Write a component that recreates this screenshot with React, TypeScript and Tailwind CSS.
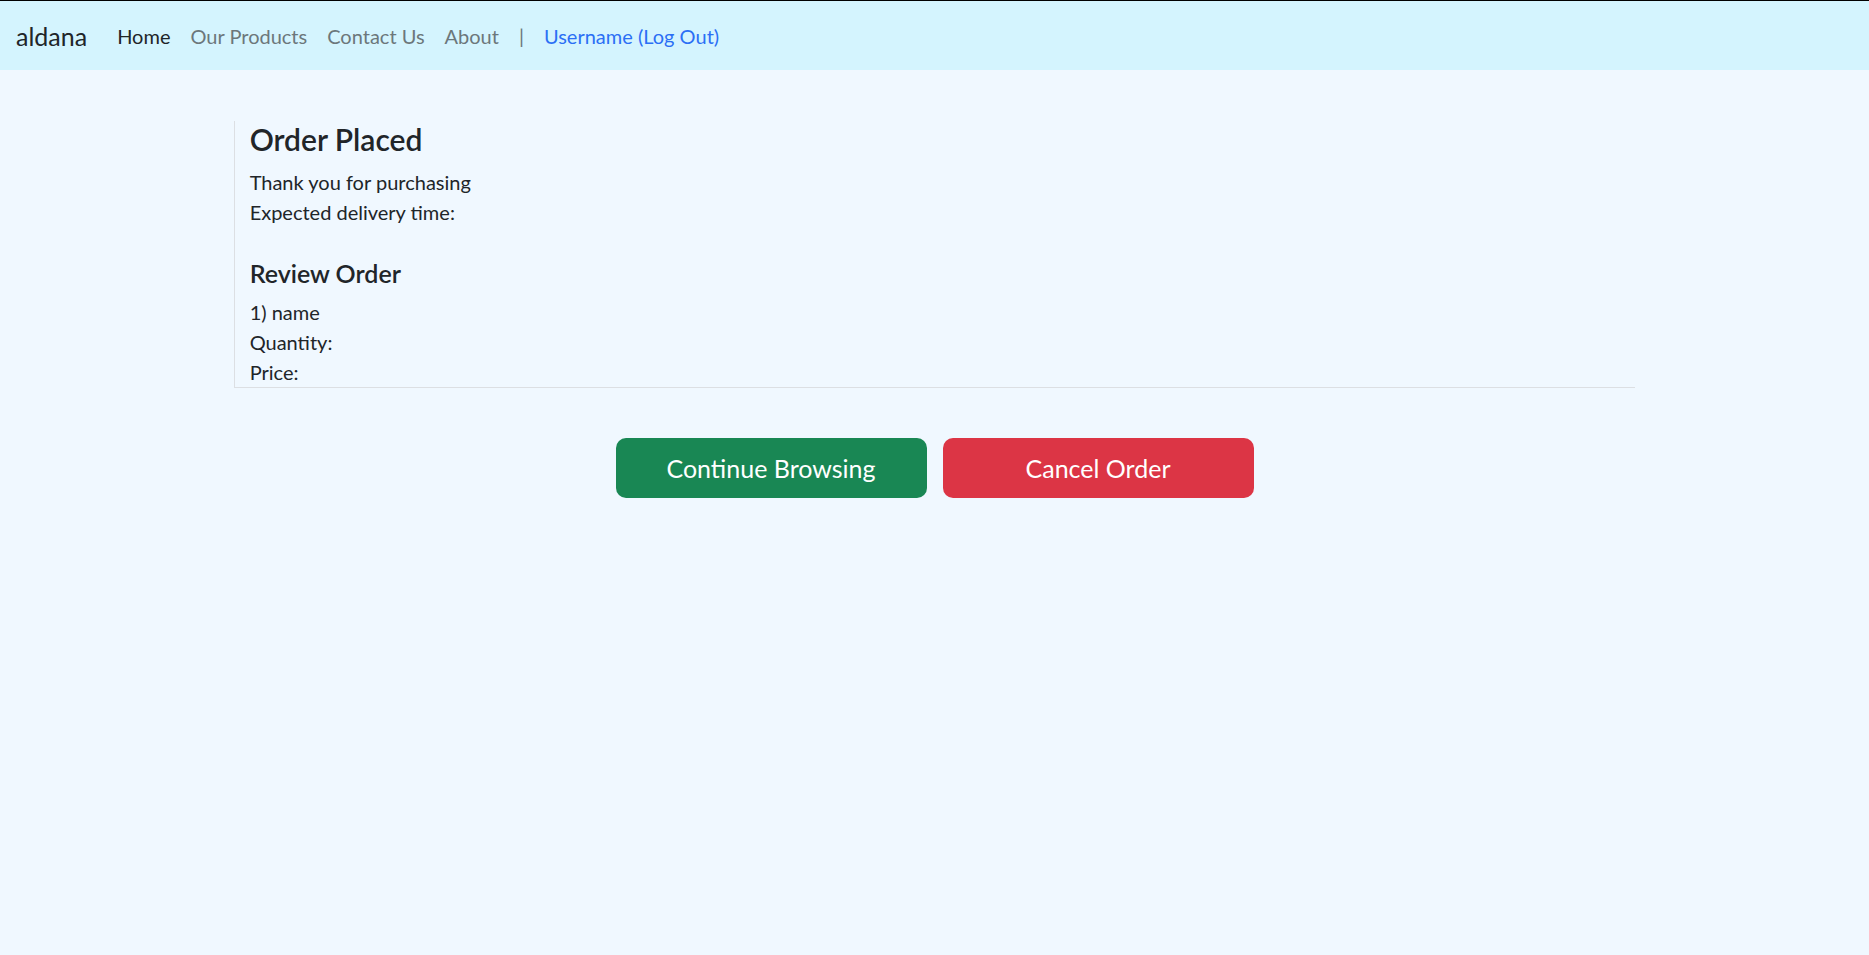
const navLinks = ['Our Products', 'Contact Us', 'About'];

export default function App() {
  return (
    <div className="min-h-[955px] bg-[#f0f8ff] text-[#212529] font-['Lato',sans-serif]">
      {/* Barra de navegación */}
      <nav className="flex items-center h-[70px] border-t border-black bg-[#d4f4fe] pl-[16px] pt-[1px]">
        <span className="text-[25px] leading-[37px] mr-[20px] text-[#212529]">aldana</span>
        <a href="#" className="px-[10px] text-[20px] leading-[30px] text-[#1e2528]">
          Home
        </a>
        {navLinks.map((l) => (
          <a key={l} href="#" className="px-[10px] text-[20px] leading-[30px] text-[#6c777b]">
            {l}
          </a>
        ))}
        <span className="px-[10px] text-[20px] leading-[30px] text-[#6c777b]">|</span>
        <a href="#" className="px-[10px] text-[20px] leading-[30px] text-[#2b6ff5]">
          Username (Log Out)
        </a>
      </nav>

      {/* Resumen del pedido */}
      <main className="pt-[51px]">
        <div className="w-3/4 mx-auto border-l border-b border-[#dcdfe3] pl-[15px]">
          <h4 className="text-[30px] leading-[36px] font-semibold mb-[10px]">Order Placed</h4>
          <p className="text-[20px] leading-[30px]">Thank you for purchasing</p>
          <p className="text-[20px] leading-[30px] mb-[31px]">Expected delivery time:</p>

          <h5 className="text-[25px] leading-[30px] font-semibold mb-[9px]">Review Order</h5>
          <div className="text-[20px] leading-[30px]">
            <p>1) name</p>
            <p>Quantity:</p>
            <p>Price:</p>
          </div>
        </div>

        {/* Botones de acción */}
        <div className="flex justify-center gap-[16px] mt-[50px]">
          <button className="w-[311px] h-[60px] rounded-[10px] bg-[#198754] text-white text-[25px] leading-[37px]">
            Continue Browsing
          </button>
          <button className="w-[311px] h-[60px] rounded-[10px] bg-[#dc3545] text-white text-[25px] leading-[37px]">
            Cancel Order
          </button>
        </div>
      </main>
    </div>
  );
}
